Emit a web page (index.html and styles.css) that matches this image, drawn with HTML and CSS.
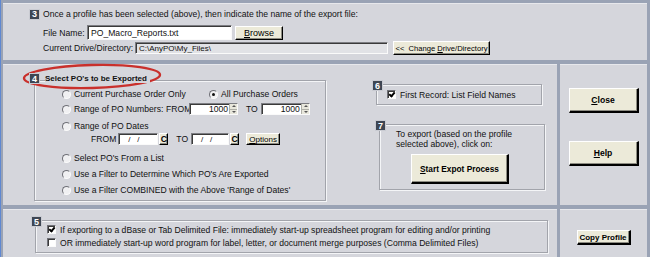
FILE: index.html
```html
<!DOCTYPE html>
<html lang="en">
<head>
<meta charset="UTF-8" />
<title>Export Purchase Orders</title>
<link rel="stylesheet" href="styles.css">
</head>
<body>
<div class="window">
  <div class="panel top">
    <div class="line"><span class="badge">3</span>Once a profile has been selected (above), then indicate the name of the export file:</div>
    <div class="row file-row">
      <span class="lbl file-lbl">File Name:</span>
      <span class="field file-field">PO_Macro_Reports.txt</span>
      <button class="btn browse"><span><u>B</u>rowse</span></button>
    </div>
    <div class="row dir-row">
      <span class="lbl dir-lbl">Current Drive/Directory:</span>
      <span class="field readonly dir-field">C:\AnyPO\My_Files\</span>
      <button class="btn change"><span>&lt;&lt;&nbsp; Change <u>D</u>rive/Directory</span></button>
    </div>
  </div>

  <div class="panel mid">
    <div class="select-group">
      <div class="legend"><span class="badge">4</span><b>Select PO's to be Exported</b></div>
      <div class="box select-box">
        <div class="opt r1">
          <span class="choice first"><i class="radio"></i>Current Purchase Order Only</span>
          <span class="choice"><i class="radio on"></i>All Purchase Orders</span>
        </div>
        <div class="opt r2">
          <span class="choice numbers"><i class="radio"></i>Range of PO Numbers:</span>
          <span class="word from">FROM</span>
          <span class="spin"><span class="val">1000</span><span class="arrows"><i class="up"></i><i class="dn"></i></span></span>
          <span class="word to">TO</span>
          <span class="spin"><span class="val">1000</span><span class="arrows"><i class="up"></i><i class="dn"></i></span></span>
        </div>
        <div class="opt r3"><span class="choice"><i class="radio"></i>Range of PO Dates</span></div>
        <div class="opt r4">
          <span class="word">FROM</span>
          <span class="field date">/&nbsp;&nbsp;&nbsp;/</span><button class="btn cal">C</button>
          <span class="word to">TO</span>
          <span class="field date d2">/&nbsp;&nbsp;&nbsp;/</span><button class="btn cal">C</button>
          <button class="btn options"><span><u>O</u>ptions</span></button>
        </div>
        <div class="opt r5"><span class="choice"><i class="radio"></i>Select PO's From a List</span></div>
        <div class="opt r6"><span class="choice"><i class="radio"></i>Use a Filter to Determine Which PO's Are Exported</span></div>
        <div class="opt r7"><span class="choice"><i class="radio"></i>Use a Filter COMBINED with the Above 'Range of Dates'</span></div>
      </div>
    </div>

    <div class="side">
      <div class="box names-box">
        <span class="badge corner">6</span>
        <span class="choice"><i class="check on"></i>First Record: List Field Names</span>
      </div>
      <div class="box run-box">
        <span class="badge corner">7</span>
        <p class="note">To export (based on the profile<br>selected above), click on:</p>
        <button class="btn bold start"><span><u>S</u>tart Expot Process</span></button>
      </div>
    </div>
  </div>

  <div class="panel mid-right">
    <button class="btn bold big"><span><u>C</u>lose</span></button>
    <button class="btn bold big help"><span><u>H</u>elp</span></button>
  </div>

  <div class="panel bottom">
    <div class="box launch-box">
      <span class="badge corner">5</span>
      <span class="choice"><i class="check on"></i>If exporting to a dBase or Tab Delimited File: immediately start-up spreadsheet program for editing and/or printing</span>
      <span class="choice"><i class="check"></i>OR immediately start-up word program for label, letter, or document merge purposes (Comma Delimited Files)</span>
    </div>
  </div>

  <div class="panel bottom-right">
    <button class="btn bold copy"><span>Copy Profile</span></button>
  </div>

  <svg class="mark" width="650" height="257" viewBox="0 0 650 257">
    <ellipse cx="92" cy="76.5" rx="68" ry="11.5" transform="rotate(-1.5 92 76.5)" fill="none" stroke="#c9302c" stroke-width="2.4"/>
  </svg>
</div>
</body>
</html>
```

FILE: styles.css
```css
* {
  box-sizing: border-box;
}
body {
  margin: 0;
  font-family: "Liberation Sans", Arial, sans-serif;
  font-size: 8.6px;
  color: #111;
}
.window {
  position: relative;
  width: 650px;
  height: 257px;
  overflow: hidden;
  background: #9aa3b5;
  border-left: 1px solid #5f88d2;
  padding: 3px 3px 0 2px;
  display: grid;
  grid-template-columns: 554px 87px;
  grid-template-rows: 57px 141px 48px;
  gap: 4px 3px;
}
.panel {
  background: #d5d6dc;
  border-top: 1px solid #e7e8ec;
  position: relative;
}
.top {
  grid-column: 1 / 3;
  padding: 4px 0 0 26px;
}

/* number badges */
.badge {
  display: inline-flex;
  align-items: center;
  justify-content: center;
  width: 11px;
  height: 11px;
  background: #3e4653;
  color: #fff;
  font-weight: bold;
  font-size: 9px;
  border: 1px solid #c9cbd2;
}
.badge.corner {
  position: absolute;
  left: -5px;
  top: -5px;
}

.line {
  display: flex;
  align-items: center;
  gap: 3px;
  height: 12px;
}
.row {
  display: flex;
  align-items: center;
  margin-left: 14px;
}
.file-row {
  margin-top: 5px;
  height: 15px;
}
.dir-row {
  margin-top: 1px;
  height: 14px;
}
.file-lbl {
  width: 44px;
}
.dir-lbl {
  width: 92px;
}

/* sunken fields */
.field {
  display: inline-flex;
  align-items: center;
  background: #fff;
  border: 1px solid;
  border-color: #7c7d82 #fafafa #fafafa #7c7d82;
  box-shadow: inset 1px 1px 0 #3a3a3a;
  padding-left: 3px;
  white-space: nowrap;
}
.file-field {
  width: 145px;
  height: 15px;
}
.dir-field {
  width: 253px;
  height: 12px;
  font-size: 8px;
}
.readonly {
  background: #e1e2e6;
}

/* raised buttons */
.btn {
  font: inherit;
  color: #000;
  background: #ecead9;
  border: 1px solid;
  border-color: #fff #000 #000 #fff;
  box-shadow: inset -1px -1px 0 #8d8c82;
  padding: 0;
  display: inline-flex;
  align-items: center;
  justify-content: center;
  flex-shrink: 0;
  white-space: nowrap;
}
.bold {
  font-weight: bold;
}
.browse {
  width: 48px;
  height: 14px;
  margin-left: 3px;
  font-size: 9px;
}
.change {
  width: 97px;
  height: 14px;
  margin-left: 5px;
  font-size: 7.6px;
}

/* middle band */
.mid {
  display: grid;
  grid-template-columns: 297px 172px;
  column-gap: 49px;
  padding: 8px 0 0 26px;
  align-items: start;
}
.legend {
  position: relative;
  z-index: 1;
  display: flex;
  align-items: center;
  gap: 5px;
  height: 11px;
}
.legend b {
  background: #d5d6dc;
  padding-right: 3px;
  font-size: 8px;
}
.box {
  position: relative;
  border: 1px solid #a2a4ab;
  box-shadow: inset 1px 1px 0 #f4f5f7, 1px 1px 0 #f4f5f7;
}
.select-box {
  margin: -4px 0 0 5px;
  height: 121px;
  padding: 7px 0 0 27px;
}
.opt {
  display: flex;
  align-items: center;
  height: 12px;
  white-space: nowrap;
}
.r2 { margin-top: 3px; }
.r3 { margin-top: 5px; }
.r4 { margin-top: 1px; padding-left: 29px; }
.r5 { margin-top: 7px; }
.r6 { margin-top: 4px; }
.r7 { margin-top: 4px; }

.choice {
  display: inline-flex;
  align-items: center;
  white-space: nowrap;
  flex-shrink: 0;
}
.first {
  width: 147px;
}
.numbers {
  width: 104px;
}
.word {
  margin-right: 2px;
  flex-shrink: 0;
}
.from {
  width: 21px;
}
.to {
  margin: 0 3px 0 8px;
}

/* radios and checks */
.radio {
  display: inline-block;
  position: relative;
  width: 9px;
  height: 9px;
  margin-right: 3px;
  border-radius: 50%;
  border: 1px solid;
  border-color: #6f7077 #fbfbfb #fbfbfb #6f7077;
  background: #f0f0f2;
  flex-shrink: 0;
}
.radio.on::after {
  content: "";
  position: absolute;
  left: 2px;
  top: 2px;
  width: 3px;
  height: 3px;
  border-radius: 50%;
  background: #111;
}
.check {
  display: inline-block;
  position: relative;
  width: 9px;
  height: 9px;
  margin-right: 4px;
  background: #fff;
  border: 1px solid;
  border-color: #6f7077 #fbfbfb #fbfbfb #6f7077;
  box-shadow: inset 1px 1px 0 #3a3a3a;
  flex-shrink: 0;
}
.check.on::after {
  content: "";
  position: absolute;
  left: 2px;
  top: 0;
  width: 2px;
  height: 4px;
  border: solid #000;
  border-width: 0 2px 2px 0;
  transform: rotate(40deg);
}

/* spin and date fields */
.spin {
  display: inline-flex;
  width: 49px;
  height: 12px;
  flex-shrink: 0;
  background: #fff;
  border: 1px solid;
  border-color: #7c7d82 #fafafa #fafafa #7c7d82;
  box-shadow: inset 1px 1px 0 #3a3a3a;
}
.val {
  flex: 1;
  text-align: right;
  padding-right: 1px;
  line-height: 10px;
}
.arrows {
  display: flex;
  flex-direction: column;
  width: 8px;
  background: #e8e7dc;
  border-left: 1px solid #b0b0a8;
}
.arrows i {
  flex: 1;
  position: relative;
}
.arrows .up {
  border-bottom: 1px solid #b0b0a8;
}
.arrows i::after {
  content: "";
  position: absolute;
  left: 2px;
  top: 1px;
  border-left: 2px solid transparent;
  border-right: 2px solid transparent;
}
.arrows .up::after {
  border-bottom: 2px solid #555;
}
.arrows .dn::after {
  border-top: 2px solid #555;
}
.date {
  width: 40px;
  height: 12px;
  padding-left: 9px;
  font-size: 8px;
  flex-shrink: 0;
}
.d2 {
  width: 38px;
}
.cal {
  width: 9px;
  height: 12px;
  margin-left: 1px;
  font-weight: bold;
}
.options {
  width: 34px;
  height: 12px;
  margin-left: 7px;
  font-size: 8px;
}

/* right side of middle band */
.side {
  display: flex;
  flex-direction: column;
  padding-top: 11px;
}
.names-box {
  width: 166px;
  height: 21px;
  margin-left: 1px;
  padding-left: 10px;
  display: flex;
  align-items: center;
}
.run-box {
  width: 166px;
  height: 66px;
  margin: 19px 0 0 4px;
  padding: 4px 0 0 16px;
}
.note {
  margin: 0;
  line-height: 10px;
}
.start {
  width: 98px;
  height: 30px;
  margin: 5px 0 0 15px;
  border-width: 1px 2px 2px 1px;
  font-size: 8.3px;
}
.mid-right {
  display: flex;
  flex-direction: column;
  align-items: center;
  padding-top: 23px;
  gap: 28px;
}
.big {
  width: 70px;
  height: 25px;
  border-width: 1px 2px 2px 1px;
}

/* bottom band */
.bottom {
  padding: 10px 0 0 32px;
}
.launch-box {
  width: 513px;
  height: 33px;
  padding: 3px 0 0 11px;
  display: flex;
  flex-direction: column;
  gap: 2px;
}
.launch-box .choice {
  height: 11px;
}
.bottom-right {
  display: flex;
  justify-content: center;
  padding-top: 20px;
}
.copy {
  width: 54px;
  height: 15px;
  border-width: 1px 2px 2px 1px;
  font-size: 8px;
}

.mark {
  position: absolute;
  left: -1px;
  top: 0;
  pointer-events: none;
}
```
